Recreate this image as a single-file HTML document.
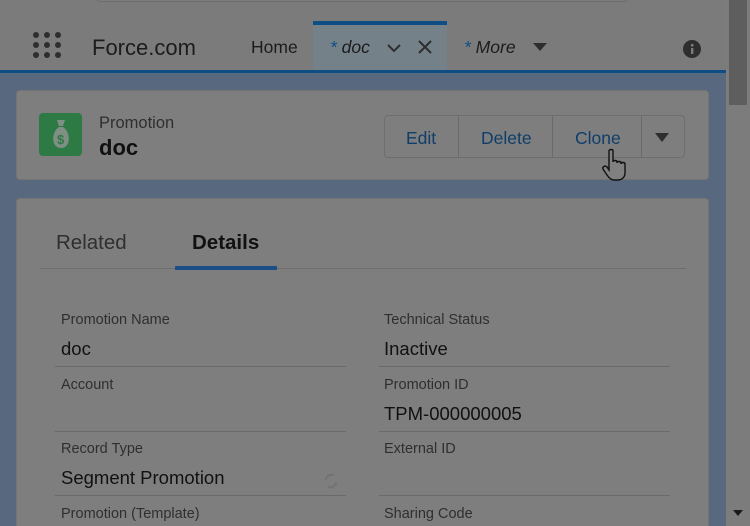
<!DOCTYPE html>
<html style="overflow:hidden;width:750px;height:526px"><head><style>
*{margin:0;padding:0;box-sizing:border-box}
body{width:750px;height:526px;overflow:hidden;background:#58697f;font-family:"Liberation Sans",sans-serif;position:relative}
.hdr{position:absolute;left:0;top:0;width:726px;height:70px;background:#7b7b7b}
.search{position:absolute;left:96px;top:-10px;width:532px;height:12px;border:1px solid #6e6e6e;border-radius:4px}
.blueline{position:absolute;left:0;top:70px;width:726px;height:3px;background:#0f4e85}
.sb{position:absolute;left:726px;top:0;width:24px;height:526px;background:#7c7c7c}
.thumb{position:absolute;left:729px;top:0;width:18px;height:105px;background:#5e5e5e}
.card{position:absolute;background:#7e7e7e;border:1px solid #747474;border-radius:4px}
.t{position:absolute;white-space:nowrap}
.lbl{font-size:14.5px;color:#2f2f2f}
.val{font-size:18.5px;color:#111}
.ln{position:absolute;height:1px;background:#6a6a6a}
</style></head><body>
<div class="hdr"><div class="search"></div></div>
<svg style="position:absolute;left:33px;top:32px" width="30" height="28">
<g fill="#2e2e2e"><circle cx="3" cy="3" r="3"/><circle cx="14" cy="3" r="3"/><circle cx="25" cy="3" r="3"/><circle cx="3" cy="13" r="3"/><circle cx="14" cy="13" r="3"/><circle cx="25" cy="13" r="3"/><circle cx="3" cy="23" r="3"/><circle cx="14" cy="23" r="3"/><circle cx="25" cy="23" r="3"/></g></svg>
<div class="t" style="left:92px;top:35px;font-size:22px;color:#1c1c1c">Force.com</div>
<div class="t" style="left:251px;top:37px;font-size:17.5px;color:#1c1c1c">Home</div>
<div style="position:absolute;left:313px;top:21px;width:134px;height:49px;background:#758189;border-top:4px solid #0f4e85"></div>
<div class="t" style="left:330px;top:37px;font-size:17.5px;color:#1c1c1c;font-style:italic"><span style="color:#0f4e85">*</span> doc</div>
<svg style="position:absolute;left:386px;top:42px" width="16" height="12"><path d="M2 3 L8 9 L14 3" stroke="#2e2e2e" stroke-width="2" fill="none"/></svg>
<svg style="position:absolute;left:418px;top:40px" width="14" height="14"><path d="M1 1 L13 13 M13 1 L1 13" stroke="#2e2e2e" stroke-width="2"/></svg>
<div class="t" style="left:464px;top:37px;font-size:17.5px;color:#1c1c1c;font-style:italic"><span style="color:#0f4e85">*</span> More</div>
<svg style="position:absolute;left:532px;top:42px" width="16" height="10"><path d="M1 1 L15 1 L8 9Z" fill="#2e2e2e"/></svg>
<svg style="position:absolute;left:683px;top:40px" width="18" height="18"><circle cx="9" cy="9" r="9" fill="#2e2e2e"/><rect x="8" y="8" width="2.4" height="6" fill="#7b7b7b"/><circle cx="9.2" cy="5.2" r="1.4" fill="#7b7b7b"/></svg>
<div class="blueline"></div>

<div class="card" style="left:16px;top:90px;width:693px;height:90px"></div>
<div style="position:absolute;left:39px;top:113px;width:43px;height:43px;background:#2e7a45;border-radius:4px"></div>
<svg style="position:absolute;left:49px;top:118px" width="24" height="33"><path d="M8 2 L16 2 L14 8 L10 8Z M10 9 L14 9 C22 14 22 30 12 30 C2 30 2 14 10 9Z" fill="#7f8f84"/><text x="8" y="26" font-size="13" font-weight="bold" fill="#2e7a45" font-family="Liberation Sans">$</text></svg>
<div class="t" style="left:99px;top:114px;font-size:16.5px;color:#2f2f2f">Promotion</div>
<div class="t" style="left:99px;top:135px;font-size:22px;font-weight:bold;color:#111">doc</div>
<div style="position:absolute;left:384px;top:115px;width:301px;height:43px;border:1px solid #6e6e6e;border-radius:4px;background:#7e7e7e"></div>
<div class="ln" style="left:458px;top:116px;width:1px;height:41px"></div>
<div class="ln" style="left:552px;top:116px;width:1px;height:41px"></div>
<div class="ln" style="left:641px;top:116px;width:1px;height:41px"></div>
<div class="t" style="left:406px;top:128px;font-size:17.5px;color:#0f3e6a">Edit</div>
<div class="t" style="left:481px;top:128px;font-size:17.5px;color:#0f3e6a">Delete</div>
<div class="t" style="left:575px;top:128px;font-size:17.5px;color:#0f3e6a">Clone</div>
<svg style="position:absolute;left:655px;top:133px" width="14" height="9"><path d="M0 0 L14 0 L7 9Z" fill="#2e2e2e"/></svg>
<svg style="position:absolute;left:601px;top:148px" width="28" height="34"><path d="M8 3 C8 1 12 1 12 3 L12 14 C12 12 16 12 16 14 L16 15 C16 13 20 13 20 15 L20 16 C20 14 24 14 24 16 L24 25 C24 29 21 32 17 32 L13 32 C10 32 8 30 6 27 L2 21 C1 19 4 17 6 19 L8 22Z" fill="#808080" stroke="#111" stroke-width="1.4"/></svg>

<div class="card" style="left:16px;top:198px;width:693px;height:340px;border-bottom:none"></div>
<div class="t" style="left:56px;top:231px;font-size:20.5px;color:#2f2f2f">Related</div>
<div class="t" style="left:192px;top:231px;font-size:20.5px;font-weight:bold;color:#111">Details</div>
<div class="ln" style="left:40px;top:268px;width:646px;background:#6e6e6e"></div>
<div style="position:absolute;left:175px;top:266px;width:102px;height:4px;background:#1b4e85"></div>

<div class="t lbl" style="left:61px;top:312px">Promotion Name</div>
<div class="t val" style="left:61px;top:338px">doc</div>
<div class="ln" style="left:55px;top:366px;width:291px"></div>
<div class="t lbl" style="left:384px;top:312px">Technical Status</div>
<div class="t val" style="left:384px;top:338px">Inactive</div>
<div class="ln" style="left:379px;top:366px;width:291px"></div>

<div class="t lbl" style="left:61px;top:377px">Account</div>
<div class="ln" style="left:55px;top:431px;width:291px"></div>
<div class="t lbl" style="left:384px;top:377px">Promotion ID</div>
<div class="t val" style="left:384px;top:403px">TPM-000000005</div>
<div class="ln" style="left:379px;top:431px;width:291px"></div>

<div class="t lbl" style="left:61px;top:441px">Record Type</div>
<div class="t val" style="left:61px;top:467px">Segment Promotion</div>
<svg style="position:absolute;left:322px;top:472px" width="18" height="18"><path d="M4 8 C4 4 8 2 12 3 M14 10 C14 14 10 16 6 15" stroke="#737373" stroke-width="2" fill="none"/></svg>
<div class="ln" style="left:55px;top:495px;width:291px"></div>
<div class="t lbl" style="left:384px;top:441px">External ID</div>
<div class="ln" style="left:379px;top:495px;width:291px"></div>

<div class="t lbl" style="left:61px;top:506px">Promotion (Template)</div>
<div class="t lbl" style="left:384px;top:506px">Sharing Code</div>

<div class="sb"></div><div class="thumb"></div>
<svg style="position:absolute;left:732px;top:509px" width="12" height="8"><path d="M1 1 L11 1 L6 7Z" fill="#1a1a1a"/></svg>
</body></html>
